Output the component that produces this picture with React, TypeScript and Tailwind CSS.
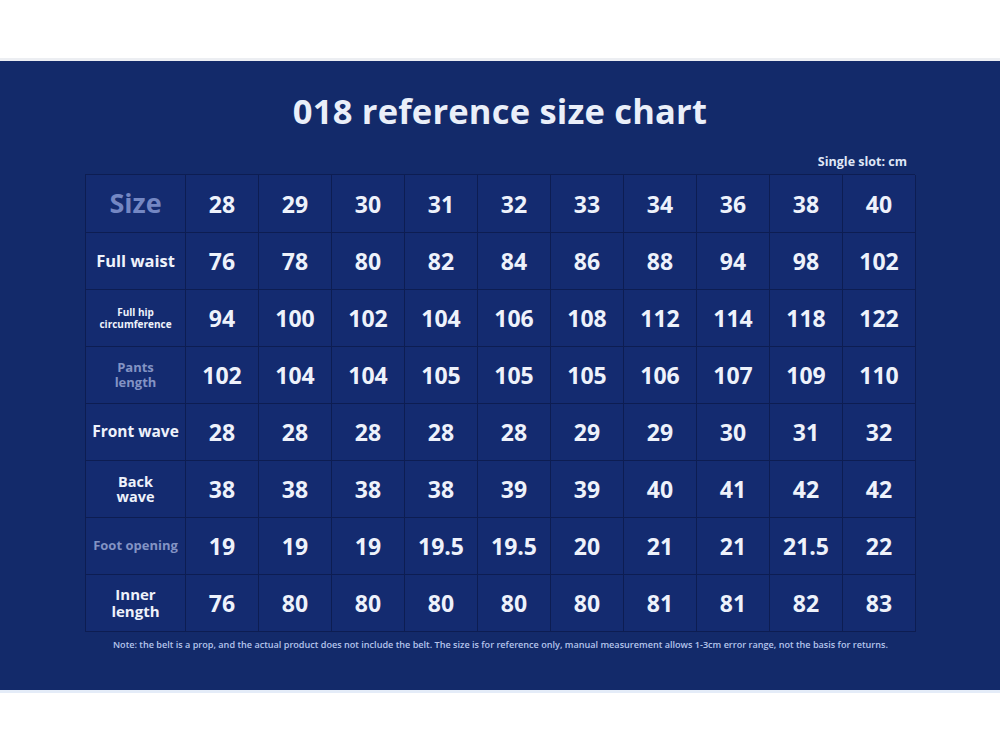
import React from "react";

const cols = ["28", "29", "30", "31", "32", "33", "34", "36", "38", "40"];

type Row = { label: React.ReactNode; labelClass: string; values: string[] };

const rows: Row[] = [
  { label: "Full waist", labelClass: "text-[16.5px] text-[#eef2fb]", values: ["76", "78", "80", "82", "84", "86", "88", "94", "98", "102"] },
  { label: <>Full hip<br />circumference</>, labelClass: "text-[10px] leading-[12px] text-[#eef2fb]", values: ["94", "100", "102", "104", "106", "108", "112", "114", "118", "122"] },
  { label: <>Pants<br />length</>, labelClass: "text-[13px] leading-[15px] text-[#8393c4]", values: ["102", "104", "104", "105", "105", "105", "106", "107", "109", "110"] },
  { label: "Front wave", labelClass: "text-[15.5px] text-[#eef2fb]", values: ["28", "28", "28", "28", "28", "29", "29", "30", "31", "32"] },
  { label: <>Back<br />wave</>, labelClass: "text-[14.5px] leading-[15px] text-[#eef2fb]", values: ["38", "38", "38", "38", "39", "39", "40", "41", "42", "42"] },
  { label: "Foot opening", labelClass: "text-[13px] text-[#8393c4]", values: ["19", "19", "19", "19.5", "19.5", "20", "21", "21", "21.5", "22"] },
  { label: <>Inner<br />length</>, labelClass: "text-[15px] leading-[17px] text-[#eef2fb]", values: ["76", "80", "80", "80", "80", "80", "81", "81", "82", "83"] },
];

const cell = "flex items-center justify-center border-r border-b border-[#0d1d52] text-center";

export default function App() {
  return (
    <div className="w-[1000px] h-[750px] bg-white flex flex-col" style={{ fontFamily: '"Open Sans", "Noto Sans", sans-serif' }}>
      <div className="h-[58px] bg-white" />
      <div className="h-[3px] bg-[#eceef2]" />
      <div className="h-[629px] bg-[#132a6a] flex flex-col items-center">
        <h1 className="mt-[30px] h-[40px] flex items-center text-[34.5px] font-bold tracking-[0.2px] text-[#eaeff9]">
          018 reference size chart
        </h1>
        <div className="w-[830px] flex justify-end pr-[8px] mt-[22px] h-[20px] text-[12.5px] font-bold text-[#dfe6f6]">
          Single slot: cm
        </div>
        <div className="mt-[1px] w-[830px] grid grid-cols-[100px_repeat(10,73px)] border-l border-t border-[#0d1d52] bg-[#142b70] font-bold">
          <div className={`${cell} h-[58px] text-[27px] text-[#7487c3]`}>Size</div>
          {cols.map((c) => (
            <div key={c} className={`${cell} h-[58px] text-[23px] text-[#eef2fb] pt-[2px]`}>{c}</div>
          ))}
          {rows.map((r, i) => (
            <React.Fragment key={i}>
              <div className={`${cell} h-[57px] ${r.labelClass}`}>
                <span>{r.label}</span>
              </div>
              {r.values.map((v, j) => (
                <div key={j} className={`${cell} h-[57px] text-[23px] text-[#eef2fb] pt-[1px]`}>{v}</div>
              ))}
            </React.Fragment>
          ))}
        </div>
        <div className="mt-[6px] w-[830px] pl-[28px] text-[9.1px] font-semibold text-[#b4c4ec] whitespace-nowrap">
          Note: the belt is a prop, and the actual product does not include the belt. The size is for reference only, manual measurement allows 1-3cm error range, not the basis for returns.
        </div>
      </div>
      <div className="h-[3px] bg-[#e4ecf8]" />
      <div className="flex-1 bg-white" />
    </div>
  );
}
